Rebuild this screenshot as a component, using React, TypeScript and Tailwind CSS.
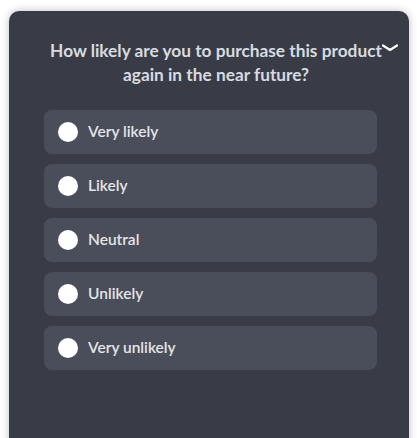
const options = ["Very likely", "Likely", "Neutral", "Unlikely", "Very unlikely"];

export default function App() {
  return (
    <div className="h-[438px] w-[417px] overflow-hidden bg-white pl-[9px] pt-[11px] font-['Lato',sans-serif]">
      <div className="relative h-[460px] w-[400px] rounded-[10px] bg-[#393c46] pl-[35px] pr-[32px] pt-[28px] shadow-[0_0_8px_rgba(0,0,0,0.25)]">
        <h2 className="-mr-[11px] text-center text-[17.3px] font-bold leading-[24px] text-[#d8dbe0]">
          How likely are you to purchase this product again in the near future?
        </h2>
        <svg
          className="absolute left-[373px] top-[33px]"
          width="16"
          height="8"
          viewBox="0 0 16 8"
          fill="none"
        >
          <polyline points="1,1.5 8,6 15,1.5" stroke="white" strokeWidth="2.2" strokeLinecap="round" strokeLinejoin="round" />
        </svg>
        <div className="mt-[23px] flex flex-col gap-[10px]">
          {options.map((o) => (
            <label
              key={o}
              className="flex h-[44px] items-center gap-[10px] rounded-[8px] bg-[#4a4d5a] px-[14px]"
            >
              <span className="h-[20px] w-[20px] shrink-0 rounded-full bg-white" />
              <span className="text-[15.5px] font-semibold text-[#e4e5e8]">{o}</span>
            </label>
          ))}
        </div>
      </div>
    </div>
  );
}
